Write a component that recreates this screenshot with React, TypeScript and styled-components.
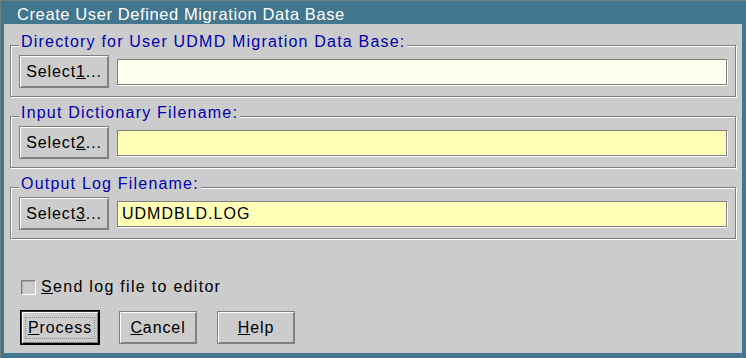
import styled, { createGlobalStyle, css } from "styled-components";

const GlobalStyle = createGlobalStyle`
  html, body {
    margin: 0;
    padding: 0;
    background: #cccccc;
  }
  * {
    box-sizing: border-box;
  }
`;

const Window = styled.div`
  display: flex;
  flex-direction: column;
  width: 746px;
  height: 358px;
  padding: 0 4px 5px 3px;
  border-top: 1px solid #6f7f80;
  border-left: 1px solid #6f7f80;
  background: #42758e;
  font-family: "Liberation Sans", Arial, sans-serif;
  font-size: 16px;
  line-height: 18px;
`;

const TitleBar = styled.div`
  height: 23px;
  padding: 4px 0 0 13px;
  color: #ffffff;
  font-size: 16.5px;
  letter-spacing: 0.6px;
  white-space: nowrap;
`;

const Client = styled.div`
  flex: 1;
  display: flex;
  flex-direction: column;
  padding: 21px 6px 8px 6px;
  background: #cccccc;
`;

const Group = styled.div`
  position: relative;
  display: flex;
  align-items: center;
  gap: 8px;
  height: 52px;
  padding: 9px 8px 8px 8px;
  border: 1px solid #808080;
  box-shadow: inset 1px 1px 0 #ffffff, 1px 1px 0 #ffffff;

  & + & {
    margin-top: 19px;
  }
`;

const Legend = styled.span`
  position: absolute;
  top: -13px;
  left: 8px;
  padding: 0 2px;
  background: #cccccc;
  color: #0000b0;
  letter-spacing: 1.2px;
  white-space: nowrap;
`;

const Button = styled.button<{ $default?: boolean; $w?: number }>`
  flex: none;
  display: flex;
  align-items: center;
  justify-content: center;
  width: ${(p) => p.$w ?? 78}px;
  height: 33px;
  padding: 0;
  border: 1px solid #808080;
  background: #cccccc;
  box-shadow: inset 1px 1px 0 #ffffff, inset -1px -1px 0 #808080;
  color: #000000;
  font: inherit;
  letter-spacing: 0.9px;
  ${(p) =>
    p.$default &&
    css`
      outline: 1px solid #000000;
      border-color: #303030;
      border-right-color: #000000;
      border-bottom-color: #000000;
    `}
`;

const Focus = styled.span`
  padding: 1px 2px;
  border: 1px dotted #8a8a8a;
`;

const Field = styled.div<{ $bg: string }>`
  flex: 1;
  height: 26px;
  padding: 3px 0 0 4px;
  border: 1px solid #808080;
  box-shadow: 1px 1px 0 #ffffff;
  background: ${(p) => p.$bg};
  color: #000000;
  letter-spacing: 1px;
`;

const CheckRow = styled.label`
  display: flex;
  align-items: center;
  gap: 5px;
  height: 16px;
  margin: 40px 0 0 11px;
  letter-spacing: 1.3px;
  color: #000000;
`;

const CheckBox = styled.span`
  width: 15px;
  height: 15px;
  border: 1px solid #808080;
  border-right-color: #ffffff;
  border-bottom-color: #ffffff;
  box-shadow: inset 1px 1px 0 #a8a8a8;
  background: #cccccc;
`;

const ButtonRow = styled.div`
  display: flex;
  gap: 20px;
  margin: 16px 0 0 11px;
`;

const fields = [
  {
    label: "Directory for User UDMD Migration Data Base:",
    key: "1",
    bg: "#fffff0",
    value: "",
  },
  { label: "Input Dictionary Filename:", key: "2", bg: "#ffffb8", value: "" },
  {
    label: "Output Log Filename:",
    key: "3",
    bg: "#ffffb8",
    value: "UDMDBLD.LOG",
  },
];

const App = () => {
  return (
    <>
      <GlobalStyle />
      <Window>
        <TitleBar>Create User Defined Migration Data Base</TitleBar>
        <Client>
          {fields.map((f) => (
            <Group key={f.key}>
              <Legend>{f.label}</Legend>
              <Button $w={90}>
                Select<u>{f.key}</u>...
              </Button>
              <Field $bg={f.bg}>{f.value}</Field>
            </Group>
          ))}
          <CheckRow>
            <CheckBox />
            <span>
              <u>S</u>end log file to editor
            </span>
          </CheckRow>
          <ButtonRow>
            <Button $default>
              <Focus>
                <u>P</u>rocess
              </Focus>
            </Button>
            <Button>
              <u>C</u>ancel
            </Button>
            <Button>
              <u>H</u>elp
            </Button>
          </ButtonRow>
        </Client>
      </Window>
    </>
  );
};

export default App;
